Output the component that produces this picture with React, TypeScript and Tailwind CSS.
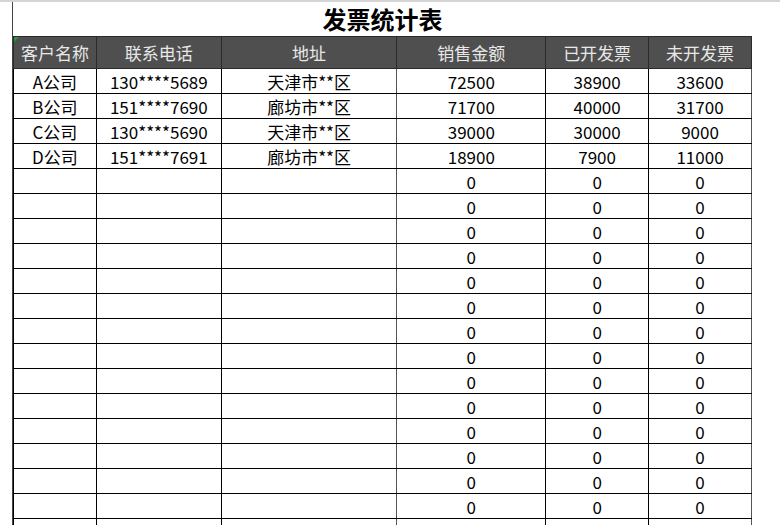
import React from 'react'

const cols = [83, 125, 176, 149, 103, 103]
const headers = ['客户名称', '联系电话', '地址', '销售金额', '已开发票', '未开发票']

const rows: (string | number)[][] = [
  ['A公司', '130****5689', '天津市**区', 72500, 38900, 33600],
  ['B公司', '151****7690', '廊坊市**区', 71700, 40000, 31700],
  ['C公司', '130****5690', '天津市**区', 39000, 30000, 9000],
  ['D公司', '151****7691', '廊坊市**区', 18900, 7900, 11000],
]

// zero rows below the data; the last one is only partly on screen
const emptyRows: (string | number)[][] = Array.from({ length: 14 }, () => ['', '', '', 0, 0, 0])

export default function App() {
  const all = [...rows, ...emptyRows, ['', '', '', '', '', '']]
  return (
    <div
      className="w-[780px] h-[525px] overflow-hidden bg-white border-t-2 border-[#d4d4d4]"
      style={{ fontFamily: '"Noto Sans CJK SC", "Noto Sans", sans-serif' }}
    >
      <div className="ml-3 w-[740px] border-l border-[#444]">
        {/* title */}
        <div className="h-[34px] flex items-center justify-center text-[24px] font-bold text-black leading-none">
          发票统计表
        </div>
        <table className="table-fixed border-collapse text-[17px] leading-none">
          <colgroup>
            {cols.map((w, i) => (
              <col key={i} style={{ width: w }} />
            ))}
          </colgroup>
          <thead>
            <tr className="h-[32px] bg-[#4f4f4f] text-[#e8e8e8]">
              {headers.map((h, i) => (
                <th
                  key={h}
                  className="relative font-normal text-center border border-[#2a2a2a] p-0"
                >
                  {i === 0 && (
                    <span className="absolute left-0 top-0 w-0 h-0 border-t-[5px] border-r-[5px] border-t-[#1e9e3a] border-r-transparent" />
                  )}
                  {h}
                </th>
              ))}
            </tr>
          </thead>
          <tbody>
            {all.map((r, ri) => (
              <tr key={ri} className="h-[25px] text-black">
                {r.map((c, ci) => (
                  <td
                    key={ci}
                    className={
                      'text-center p-0 border border-black ' +
                      (ci === 2 || ci === 5 ? 'border-r-[#555]' : '')
                    }
                  >
                    {c}
                  </td>
                ))}
              </tr>
            ))}
          </tbody>
        </table>
      </div>
    </div>
  )
}
